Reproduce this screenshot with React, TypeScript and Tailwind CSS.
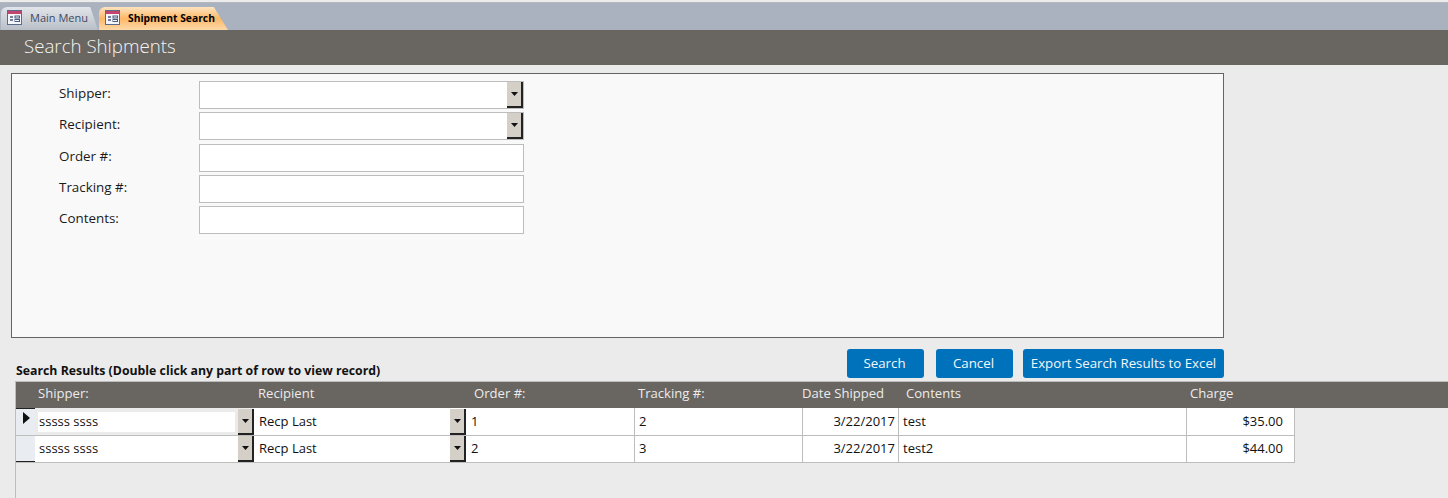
import { ReactNode } from 'react'

const rows = [
  { shipper: 'sssss ssss', recipient: 'Recp Last', order: '1', tracking: '2', date: '3/22/2017', contents: 'test', charge: '$35.00', current: true },
  { shipper: 'sssss ssss', recipient: 'Recp Last', order: '2', tracking: '3', date: '3/22/2017', contents: 'test2', charge: '$44.00', current: false },
]

function FormIcon() {
  return (
    <svg width="15" height="15" viewBox="0 0 15 15" className="shrink-0 mb-[2px]">
      <rect x="0.5" y="0.5" width="14" height="14" fill="#f4f6fa" stroke="#5b6b8c" />
      <rect x="1" y="1" width="13" height="3" fill="#c2456e" />
      <path d="M3 7h3M3 10h3" stroke="#4a5a80" strokeWidth="1.4" />
      <rect x="8" y="6" width="4.5" height="2" fill="none" stroke="#4a5a80" />
      <rect x="8" y="9.5" width="4.5" height="2" fill="none" stroke="#4a5a80" />
    </svg>
  )
}

function DropButton() {
  return (
    <div className="flex items-center justify-center self-end bg-[#d4d0c8] border-r-2 border-b-2 border-[#222] shrink-0 w-[16px] h-[26px]">
      <svg width="7" height="4" viewBox="0 0 7 4">
        <path d="M0 0h7L3.5 4z" fill="#111" />
      </svg>
    </div>
  )
}

function Field({ label, combo, className }: { label: string; combo?: boolean; className: string }) {
  return (
    <div className={`flex items-center ${className}`}>
      <div className="w-[140px] mb-[4px] text-[13.4px] text-[#1a1a1a]">{label}</div>
      <div className="w-[325px] h-[28px] bg-white border border-[#bdbdbd] flex justify-end">
        {combo && <DropButton />}
      </div>
    </div>
  )
}

function Cell({ w, right, current, children }: { w: string; right?: boolean; current: boolean; children: ReactNode }) {
  return (
    <div className={`${w} h-full flex items-center text-[13px] text-[#111] shrink-0 border-r border-[#bdbdbd] ${right ? 'justify-end' : ''}`}>
      <span className={current ? 'mt-[1px]' : ''}>{children}</span>
    </div>
  )
}

function Button({ w, children }: { w: string; children: ReactNode }) {
  return (
    <button className={`${w} h-[29px] rounded-[3px] bg-[#0072bc] text-[13.3px] text-[#f2f7fb] flex items-center justify-center`}>
      {children}
    </button>
  )
}

export default function App() {
  return (
    <div className="w-[1448px] h-[498px] overflow-hidden bg-[#ebebeb] font-['Open_Sans',sans-serif]">
      {/* Tabs */}
      <div className="h-[30px] bg-[#a9b2be] border-t-[3px] border-[#b4b8bd] relative">
        <div className="absolute left-0 right-0 top-[-3px] h-[2px] bg-[#ececec]" />
        <div className="flex items-end h-full pl-[1px] gap-[1px]">
          <div className="w-[97px] h-[23px] bg-gradient-to-b from-[#e2e5e9] to-[#b9bfc8] rounded-t-[6px] [clip-path:polygon(0_0,92%_0,100%_100%,0_100%)] flex items-center pl-[6px] gap-[8px] text-[11px] text-[#3e4a63]">
            <FormIcon />
            <span>Main Menu</span>
          </div>
          <div className="w-[129px] h-[23px] bg-gradient-to-b from-[#fde4c0] via-[#fdb765] to-[#fdd9a8] rounded-t-[6px] [clip-path:polygon(0_0,89%_0,100%_100%,0_100%)] flex items-center pl-[6px] gap-[8px] text-[10.3px] font-bold text-black">
            <FormIcon />
            <span>Shipment Search</span>
          </div>
        </div>
      </div>

      {/* Title bar */}
      <div className="h-[35px] bg-[#696560] pl-[24px] pb-[2px] flex items-center text-[18.7px] font-light text-[#f5f5f5]">
        Search Shipments
      </div>

      {/* Search form */}
      <div className="ml-[11px] mt-[8px] w-[1213px] h-[265px] border border-[#646464] bg-[#f9f9f9] pl-[47px] pt-[7px]">
        <Field label="Shipper:" combo className="mb-[3px]" />
        <Field label="Recipient:" combo className="mb-[4px]" />
        <Field label="Order #:" className="mb-[3px]" />
        <Field label="Tracking #:" className="mb-[3px]" />
        <Field label="Contents:" />
      </div>

      {/* Results heading and actions */}
      <div className="flex items-end w-[1224px] mt-[11px] pl-[16px] h-[29px]">
        <div className="text-[12.3px] font-bold text-[#111] leading-[16px] mb-[-1px] grow">
          Search Results (Double click any part of row to view record)
        </div>
        <div className="flex">
          <Button w="w-[77px] mr-[12px] pr-[2px]">Search</Button>
          <Button w="w-[77px] mr-[10px] pr-[2px]">Cancel</Button>
          <Button w="w-[201px]">Export Search Results to Excel</Button>
        </div>
      </div>

      {/* Results grid */}
      <div className="ml-[15px] mt-[3px] h-[117px] border-l border-[#bdbdbd]">
        <div className="h-[27px] bg-[#696560] pb-[2px] flex items-center text-[13.1px] text-[#ececec] border-t border-[#bdbdbd]">
          <div className="w-[22px]" />
          <div className="w-[220px]">Shipper:</div>
          <div className="w-[216px]">Recipient</div>
          <div className="w-[164px]">Order #:</div>
          <div className="w-[164px]">Tracking #:</div>
          <div className="w-[104px]">Date Shipped</div>
          <div className="w-[284px]">Contents</div>
          <div>Charge</div>
        </div>
        {rows.map((row) => (
          <div key={row.order} className={`flex w-[1279px] border-b border-[#bdbdbd] ${row.current ? 'h-[28px]' : 'h-[27px]'}`}>
            <div className={`w-[19px] h-full shrink-0 bg-[#e9edf2] border-[#222] flex items-start pl-[7px] pt-[3px] ${row.current ? 'border-t' : 'border-b'}`}>
              {row.current && (
                <svg width="7" height="12" viewBox="0 0 7 12">
                  <path d="M0 0l7 6-7 6z" fill="#111" />
                </svg>
              )}
            </div>
            <div className={`w-[219px] h-full shrink-0 flex items-center ${row.current ? 'bg-[#ebebeb]' : 'bg-white'}`}>
              <div className="w-[3px] shrink-0" />
              <span className={`grow h-[20px] pl-[1px] flex items-center text-[13px] text-[#111] ${row.current ? 'bg-white' : ''}`}>{row.shipper}</span>
              <div className="w-[3px] shrink-0" />
              <DropButton />
            </div>
            <div className="w-[215px] h-full shrink-0 bg-white flex items-center pl-[5px]">
              <span className={`grow text-[13px] text-[#111] ${row.current ? 'mt-[1px]' : ''}`}>{row.recipient}</span>
              <DropButton />
              <div className="w-[3px] shrink-0" />
            </div>
            <div className="flex h-full bg-white">
              <Cell w="w-[166px] pl-[2px]" current={row.current}>{row.order}</Cell>
              <Cell w="w-[168px] pl-[4px]" current={row.current}>{row.tracking}</Cell>
              <Cell w="w-[96px] pr-[3px]" right current={row.current}>{row.date}</Cell>
              <Cell w="w-[288px] pl-[4px]" current={row.current}>{row.contents}</Cell>
              <Cell w="w-[108px] pr-[11px]" right current={row.current}>{row.charge}</Cell>
            </div>
          </div>
        ))}
      </div>
    </div>
  )
}
